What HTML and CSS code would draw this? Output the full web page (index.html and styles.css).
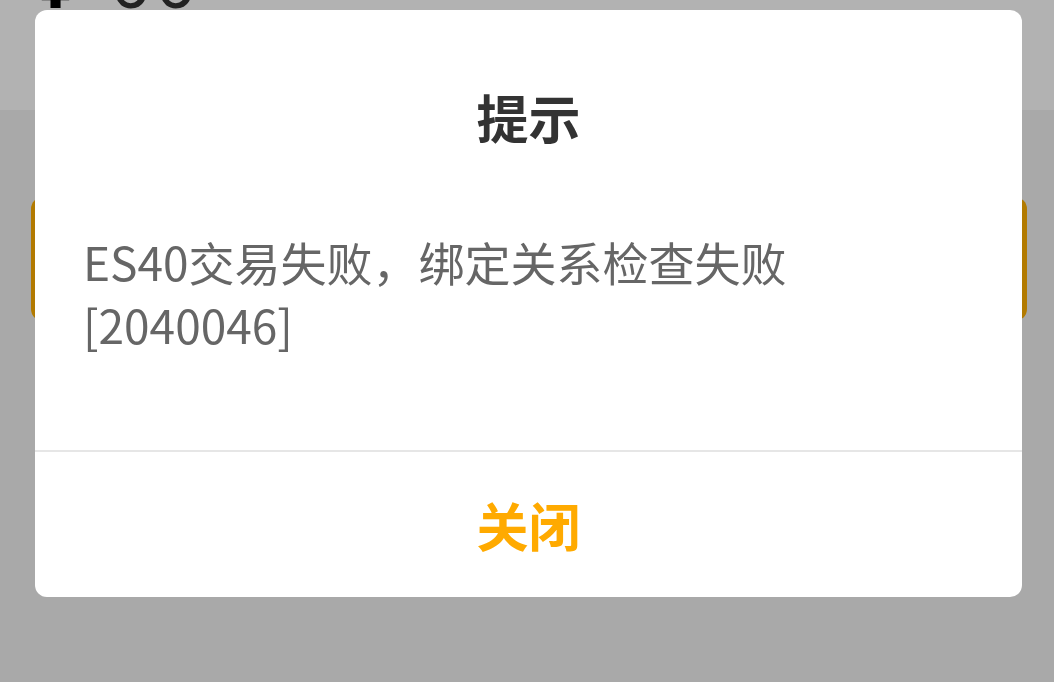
FILE: index.html
```html
<!DOCTYPE html>
<html lang="zh-CN">
<head>
    <meta charset="UTF-8">
    <meta name="viewport" content="width=device-width, initial-scale=1.0">
    <title>提示</title>
    <link rel="stylesheet" href="styles.css">
</head>
<body>
    <div class="page">
        <div class="top-bar">
            <div class="amount"><span class="amount-sign">¥</span><span class="amount-value">00</span></div>
        </div>
        <div class="content">
            <button class="main-btn"></button>
        </div>
    </div>

    <!-- Dialog -->
    <div class="mask">
        <div class="dialog">
            <div class="dialog-title">提示</div>
            <div class="dialog-body">ES40交易失败，绑定关系检查失败[2040046]</div>
            <div class="dialog-footer">
                <button class="dialog-btn">关闭</button>
            </div>
        </div>
    </div>
</body>
</html>
```

FILE: styles.css
```css
body {
    margin: 0;
    padding: 0;
    width: 1054px;
    height: 682px;
    overflow: hidden;
    font-family: "Noto Sans CJK SC", "Noto Sans", sans-serif;
    background-color: #f2f2f2;
}

.page {
    display: flex;
    flex-direction: column;
    height: 682px;
}

.top-bar {
    height: 110px;
    background-color: #ffffff;
    overflow: hidden;
}

.amount {
    display: flex;
    align-items: baseline;
    gap: 34px;
    margin-top: -56px;
    padding-left: 35px;
    font-family: "Noto Sans", sans-serif;
    font-size: 72px;
    line-height: 72px;
}

.amount-sign {
    color: #000000;
    font-weight: bold;
}

.amount-value {
    color: #333333;
    letter-spacing: 4px;
}

.content {
    flex: 1;
    padding: 87px 27px 0 31px;
}

.main-btn {
    display: block;
    width: 996px;
    height: 124px;
    border: none;
    border-radius: 12px;
    background-color: #ffaf00;
}

/* Halbtransparente Maske */
.mask {
    position: fixed;
    top: 0;
    left: 0;
    width: 1054px;
    height: 682px;
    background-color: rgba(0, 0, 0, 0.3);
    display: flex;
    align-items: flex-start;
    padding: 10px 0 0 35px;
    box-sizing: border-box;
}

.dialog {
    width: 987px;
    background-color: #ffffff;
    border-radius: 12px;
    overflow: hidden;
}

.dialog-title {
    padding-top: 71px;
    line-height: 72px;
    font-size: 52px;
    font-weight: bold;
    color: #333333;
    text-align: center;
}

.dialog-body {
    padding: 77px 48px 94px;
    font-size: 46px;
    line-height: 63px;
    color: #666666;
}

.dialog-footer {
    border-top: 2px solid #e6e6e6;
    height: 145px;
    display: flex;
}

.dialog-btn {
    flex: 1;
    border: none;
    background: none;
    font-family: "Noto Sans CJK SC", sans-serif;
    font-size: 52px;
    font-weight: bold;
    color: #ffaa00;
    padding: 0;
}
```
